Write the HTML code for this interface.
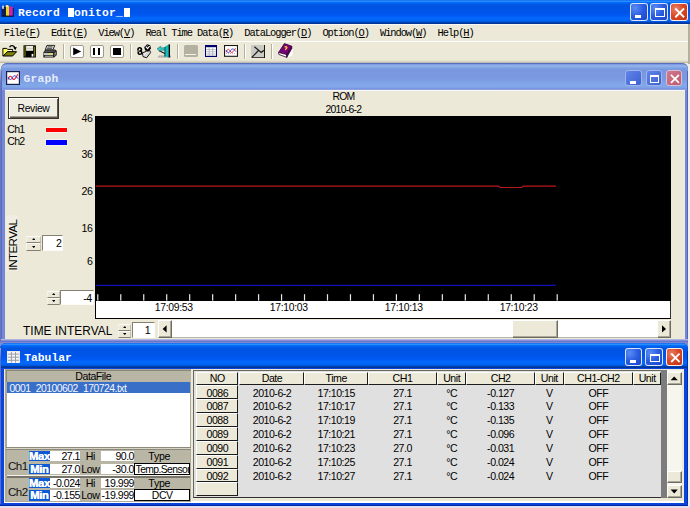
<!DOCTYPE html>
<html><head><meta charset="utf-8"><title>Record Monitor_M</title>
<style>
html,body{margin:0;padding:0;}
body{width:690px;height:508px;overflow:hidden;position:relative;background:#ece9d8;font-family:"Liberation Sans",sans-serif;}
div,i,svg{position:absolute;box-sizing:border-box;}
i{font-style:normal;display:block;text-align:center;top:0;}
.cells i{height:100%;}
.btn{background:#ece9d8;border:1px solid;border-color:#fff #716f64 #716f64 #fff;}
.sunk{background:#fff;border:1px solid;border-color:#716f64 #fff #fff #716f64;}
.hdr{background:#ece9d8;border:1px solid;border-color:#fff #1c1c1c #1c1c1c #fff;}
</style></head><body>

<div style="left:0.00px;top:0.00px;width:690.00px;height:23.70px;background:linear-gradient(to bottom,#0058ee 0%,#3593ff 4%,#288eff 6%,#127dff 8%,#036ffc 10%,#0262ee 14%,#0057e5 20%,#0054e3 24%,#0055eb 56%,#005bf5 66%,#026afe 76%,#0062ef 86%,#0052d6 92%,#0040ab 94%,#003092 100%);"></div>
<div style="left:0.00px;top:23.70px;width:690.00px;height:1.00px;background:#f8f8f4;"></div>
<svg style="left:1px;top:4px" width="14" height="14" viewBox="0 0 14 14">
<rect x="0.5" y="2.5" width="3.6" height="9.5" fill="#1a1a5a"/><rect x="1.2" y="1.6" width="1.6" height="3.2" fill="#e8f0ff"/>
<rect x="4.6" y="1.6" width="3.6" height="10.4" fill="#e8d826"/><rect x="5.2" y="1" width="1.6" height="2" fill="#fff8a0"/>
<rect x="8.3" y="2.6" width="3.6" height="9.4" fill="#d020b4"/>
<rect x="0.4" y="11.6" width="12.4" height="1.2" fill="#101020"/><rect x="3.9" y="3" width="0.8" height="9" fill="#000"/><rect x="11.8" y="4" width="0.9" height="8" fill="#181830"/>
</svg>
<div class="cells" style="left:18.00px;top:5.99px;height:15px;width:112.0px;font-family:'Liberation Mono', monospace;font-size:11.3px;line-height:15px;color:#fff;font-weight:bold;"><i style="left:0.00px;width:7.00px">R</i><i style="left:7.00px;width:7.00px">e</i><i style="left:14.00px;width:7.00px">c</i><i style="left:21.00px;width:7.00px">o</i><i style="left:28.00px;width:7.00px">r</i><i style="left:35.00px;width:7.00px">d</i><i style="left:49.90px;top:2.31px;width:6.00px;height:8.4px;background:#fff"></i><i style="left:56.00px;width:7.00px">o</i><i style="left:63.00px;width:7.00px">n</i><i style="left:70.00px;width:7.00px">i</i><i style="left:77.00px;width:7.00px">t</i><i style="left:84.00px;width:7.00px">o</i><i style="left:91.00px;width:7.00px">r</i><i style="left:98.00px;width:7.00px">_</i><i style="left:105.90px;top:2.31px;width:6.00px;height:8.4px;background:#fff"></i></div>
<div style="left:630.20px;top:2.50px;width:17.60px;height:18.30px;background:radial-gradient(circle at 25% 25%,#5a8cf5 0%,#2a5ce0 50%,#1a44c8 100%);border:1px solid rgba(240,248,255,0.88);border-radius:3px;"><div style="left:3.87px;top:11.35px;width:6.34px;height:2.93px;background:#fff"></div></div>
<div style="left:650.00px;top:2.50px;width:17.60px;height:18.30px;background:radial-gradient(circle at 25% 25%,#5a8cf5 0%,#2a5ce0 50%,#1a44c8 100%);border:1px solid rgba(240,248,255,0.88);border-radius:3px;"><div style="left:3.87px;top:4.58px;width:9.68px;height:8.78px;border:1px solid #fff;border-top-width:2.2px"></div></div>
<div style="left:670.10px;top:2.50px;width:18.00px;height:18.30px;background:radial-gradient(circle at 30% 30%,#e8846a 0%,#d94a28 45%,#c22f10 100%);border:1px solid rgba(255,255,255,0.9);border-radius:3px;"><svg style="left:0;top:0" width="18.00" height="18.30" viewBox="0 0 18 18"><path d="M5 5 L12.4 12.4 M12.4 5 L5 12.4" stroke="#fff" stroke-width="1.9" fill="none" stroke-linecap="square"/></svg></div>
<div style="left:0.00px;top:24.70px;width:690.00px;height:16.30px;background:#ece9d8;"></div>
<div class="cells" style="left:3.80px;top:25.13px;height:16px;width:36.1px;font-family:'Liberation Mono', monospace;font-size:10.4px;line-height:16px;color:#000;"><i style="left:0.00px;width:5.16px;">F</i><i style="left:5.16px;width:5.16px;">i</i><i style="left:10.32px;width:5.16px;">l</i><i style="left:15.48px;width:5.16px;">e</i><i style="left:20.64px;width:5.16px;">(</i><i style="left:25.80px;width:5.16px;text-decoration:underline;">F</i><i style="left:30.96px;width:5.16px;">)</i></div>
<div class="cells" style="left:51.02px;top:25.13px;height:16px;width:36.1px;font-family:'Liberation Mono', monospace;font-size:10.4px;line-height:16px;color:#000;"><i style="left:0.00px;width:5.16px;">E</i><i style="left:5.16px;width:5.16px;">d</i><i style="left:10.32px;width:5.16px;">i</i><i style="left:15.48px;width:5.16px;">t</i><i style="left:20.64px;width:5.16px;">(</i><i style="left:25.80px;width:5.16px;text-decoration:underline;">E</i><i style="left:30.96px;width:5.16px;">)</i></div>
<div class="cells" style="left:98.24px;top:25.13px;height:16px;width:36.1px;font-family:'Liberation Mono', monospace;font-size:10.4px;line-height:16px;color:#000;"><i style="left:0.00px;width:5.16px;">V</i><i style="left:5.16px;width:5.16px;">i</i><i style="left:10.32px;width:5.16px;">e</i><i style="left:15.48px;width:5.16px;">w</i><i style="left:20.64px;width:5.16px;">(</i><i style="left:25.80px;width:5.16px;text-decoration:underline;">V</i><i style="left:30.96px;width:5.16px;">)</i></div>
<div class="cells" style="left:145.46px;top:25.13px;height:16px;width:87.7px;font-family:'Liberation Mono', monospace;font-size:10.4px;line-height:16px;color:#000;"><i style="left:0.00px;width:5.16px;">R</i><i style="left:5.16px;width:5.16px;">e</i><i style="left:10.32px;width:5.16px;">a</i><i style="left:15.48px;width:5.16px;">l</i><i style="left:25.80px;width:5.16px;">T</i><i style="left:30.96px;width:5.16px;">i</i><i style="left:36.12px;width:5.16px;">m</i><i style="left:41.28px;width:5.16px;">e</i><i style="left:51.60px;width:5.16px;">D</i><i style="left:56.76px;width:5.16px;">a</i><i style="left:61.92px;width:5.16px;">t</i><i style="left:67.08px;width:5.16px;">a</i><i style="left:72.24px;width:5.16px;">(</i><i style="left:77.40px;width:5.16px;text-decoration:underline;">R</i><i style="left:82.56px;width:5.16px;">)</i></div>
<div class="cells" style="left:244.28px;top:25.13px;height:16px;width:67.1px;font-family:'Liberation Mono', monospace;font-size:10.4px;line-height:16px;color:#000;"><i style="left:0.00px;width:5.16px;">D</i><i style="left:5.16px;width:5.16px;">a</i><i style="left:10.32px;width:5.16px;">t</i><i style="left:15.48px;width:5.16px;">a</i><i style="left:20.64px;width:5.16px;">L</i><i style="left:25.80px;width:5.16px;">o</i><i style="left:30.96px;width:5.16px;">g</i><i style="left:36.12px;width:5.16px;">g</i><i style="left:41.28px;width:5.16px;">e</i><i style="left:46.44px;width:5.16px;">r</i><i style="left:51.60px;width:5.16px;">(</i><i style="left:56.76px;width:5.16px;text-decoration:underline;">D</i><i style="left:61.92px;width:5.16px;">)</i></div>
<div class="cells" style="left:322.46px;top:25.13px;height:16px;width:46.4px;font-family:'Liberation Mono', monospace;font-size:10.4px;line-height:16px;color:#000;"><i style="left:0.00px;width:5.16px;">O</i><i style="left:5.16px;width:5.16px;">p</i><i style="left:10.32px;width:5.16px;">t</i><i style="left:15.48px;width:5.16px;">i</i><i style="left:20.64px;width:5.16px;">o</i><i style="left:25.80px;width:5.16px;">n</i><i style="left:30.96px;width:5.16px;">(</i><i style="left:36.12px;width:5.16px;text-decoration:underline;">O</i><i style="left:41.28px;width:5.16px;">)</i></div>
<div class="cells" style="left:380.00px;top:25.13px;height:16px;width:46.4px;font-family:'Liberation Mono', monospace;font-size:10.4px;line-height:16px;color:#000;"><i style="left:0.00px;width:5.16px;">W</i><i style="left:5.16px;width:5.16px;">i</i><i style="left:10.32px;width:5.16px;">n</i><i style="left:15.48px;width:5.16px;">d</i><i style="left:20.64px;width:5.16px;">o</i><i style="left:25.80px;width:5.16px;">w</i><i style="left:30.96px;width:5.16px;">(</i><i style="left:36.12px;width:5.16px;text-decoration:underline;">W</i><i style="left:41.28px;width:5.16px;">)</i></div>
<div class="cells" style="left:437.54px;top:25.13px;height:16px;width:36.1px;font-family:'Liberation Mono', monospace;font-size:10.4px;line-height:16px;color:#000;"><i style="left:0.00px;width:5.16px;">H</i><i style="left:5.16px;width:5.16px;">e</i><i style="left:10.32px;width:5.16px;">l</i><i style="left:15.48px;width:5.16px;">p</i><i style="left:20.64px;width:5.16px;">(</i><i style="left:25.80px;width:5.16px;text-decoration:underline;">H</i><i style="left:30.96px;width:5.16px;">)</i></div>
<div style="left:0.00px;top:41.00px;width:690.00px;height:1.00px;background:#fff;"></div>
<div style="left:0.00px;top:42.00px;width:690.00px;height:18.50px;background:#ece9d8;"></div>
<div style="left:0.00px;top:59.80px;width:690.00px;height:1.00px;background:#e6e3d2;"></div>
<div style="left:0.00px;top:60.80px;width:690.00px;height:1.00px;background:#d8d5c5;"></div>
<div style="left:0.00px;top:61.80px;width:690.00px;height:1.40px;background:#c0bdae;"></div>
<div style="left:688.30px;top:24.00px;width:1.70px;height:40.00px;background:#b4b09e;"></div>
<div style="left:63.00px;top:43.80px;width:1.00px;height:15.00px;background:#b4b1a2;"></div>
<div style="left:64.00px;top:43.80px;width:1.00px;height:15.00px;background:#fff;"></div>
<div style="left:129.90px;top:43.80px;width:1.00px;height:15.00px;background:#b4b1a2;"></div>
<div style="left:130.90px;top:43.80px;width:1.00px;height:15.00px;background:#fff;"></div>
<div style="left:177.10px;top:43.80px;width:1.00px;height:15.00px;background:#b4b1a2;"></div>
<div style="left:178.10px;top:43.80px;width:1.00px;height:15.00px;background:#fff;"></div>
<div style="left:244.10px;top:43.80px;width:1.00px;height:15.00px;background:#b4b1a2;"></div>
<div style="left:245.10px;top:43.80px;width:1.00px;height:15.00px;background:#fff;"></div>
<div style="left:270.90px;top:43.80px;width:1.00px;height:15.00px;background:#b4b1a2;"></div>
<div style="left:271.90px;top:43.80px;width:1.00px;height:15.00px;background:#fff;"></div>
<svg style="left:0px;top:42px" width="40" height="18" viewBox="0 42 40 18">
<path d="M2.9 56 L2.9 48.4 L6.8 48.4 L7.6 49.4 L12.6 49.4 L12.6 51.6 L7.4 51.6 L3.4 56 Z" fill="#ffff50" stroke="#000" stroke-width="1"/>
<path d="M7.2 50.2 H12.2 V51.4 H7.2 Z" fill="#fff"/>
<path d="M3.2 56 L7.4 51.7 L16.6 51.7 L12.6 56 Z" fill="#808000" stroke="#000" stroke-width="1"/>
<path d="M9.6 47.2 C10.6 45.0 13.8 45.0 15 48" fill="none" stroke="#000" stroke-width="1.4"/>
<path d="M13.2 47.6 L16.8 47.0 L15.4 50.2 Z" fill="#000"/>
</svg>
<svg style="left:23px;top:44px" width="14" height="15" viewBox="23 44 14 15">
<rect x="23.5" y="45.3" width="12.4" height="12.2" fill="#000"/>
<rect x="24.4" y="46" width="1.2" height="10.6" fill="#74740a"/>
<rect x="33.8" y="46.6" width="1.2" height="10" fill="#74740a"/>
<rect x="26.1" y="46" width="7" height="4.8" fill="#ecebe2"/>
<rect x="26.1" y="48.2" width="7" height="0.7" fill="#c4c2b0"/>
<rect x="31.6" y="53.9" width="1.7" height="2.7" fill="#fff"/>
</svg>
<svg style="left:40px;top:42px" width="20" height="18" viewBox="40 42 20 18">
<path d="M43.4 52.6 L45.4 49.6 L55.2 49.6 L56.8 51 L56.8 55 L54.2 57.4 L43.4 57.4 Z" fill="#1c1c1c"/>
<path d="M45.2 49.8 L46.9 45.4 L54.8 45.4 L53 49.8 Z" fill="#d6d6d2" stroke="#181818" stroke-width="0.9"/>
<path d="M47.6 46.9 H52.6 M47 48.4 H52" stroke="#303030" stroke-width="0.8"/>
<path d="M45.6 50.4 L54.6 50.4 L55.8 51.6 L44.4 52.4 Z" fill="#55555a"/>
<rect x="43.9" y="53.2" width="9.2" height="1.6" fill="#f4f4f0"/>
<rect x="49" y="53.2" width="3.4" height="1.4" fill="#e8e840"/>
<rect x="44.8" y="55.7" width="8.2" height="1.0" fill="#c8c8c4"/>
<path d="M54 53.4 L56.4 51.6 L56.4 54.6 L54 56.8 Z" fill="#606068"/>
<circle cx="55.2" cy="53" r="0.6" fill="#d0d0d0"/>
</svg>
<div style="left:70.00px;top:44.60px;width:13.50px;height:13.40px;background:#fff;border:1px solid #9c9a8c;border-radius:2px;"><svg style="left:-1px;top:-1px" width="13.5" height="13.4" viewBox="0 0 13.5 13.4"><path d="M3.2 2.6 L11.2 6.5 L3.2 10.3 Z" fill="#000"/></svg></div>
<div style="left:90.20px;top:44.60px;width:13.50px;height:13.40px;background:#fff;border:1px solid #9c9a8c;border-radius:2px;"><div style="left:1.7px;top:2.7px;width:2.1px;height:6.6px;background:#000"></div><div style="left:7px;top:2.7px;width:2.2px;height:6.6px;background:#000"></div></div>
<div style="left:110.10px;top:44.60px;width:13.50px;height:13.40px;background:#fff;border:1px solid #9c9a8c;border-radius:2px;"><div style="left:1.6px;top:2.4px;width:7.9px;height:7px;background:#000"></div></div>
<svg style="left:134px;top:42px" width="20" height="18" viewBox="134 42 20 18">
<path d="M142.4 52.8 L149.6 50.2 L150.6 52.6 L146.6 57.8 L143 56.6 Z" fill="#d8d8d8" stroke="#000" stroke-width="0.9"/>
<path d="M143.6 55.2 L147 51.8" stroke="#fff" stroke-width="1"/>
<circle cx="139.7" cy="49.5" r="2.5" fill="#000"/><circle cx="139.9" cy="52.5" r="2.5" fill="#000"/>
<circle cx="139.6" cy="49.4" r="0.9" fill="#fff"/><circle cx="140" cy="52.7" r="0.9" fill="#fff"/>
<path d="M137.6 51 H139.4" stroke="#fff" stroke-width="0.7"/>
<path d="M144.2 47.2 L147.2 44.2 L150.2 45.2 L151 48.6 L148.4 51.6 L145.2 50.6 Z" fill="#000"/>
<path d="M145.8 46.6 L147.6 48.6 L149.6 46.0" fill="none" stroke="#fff" stroke-width="1.2"/>
<path d="M146.8 45.0 L148 46.2" stroke="#b0b0b0" stroke-width="0.8"/>
</svg>
<svg style="left:155px;top:42px" width="18" height="18" viewBox="155 42 18 18">
<path d="M157.4 57.4 L159 55.6 L171 55.6 L171 57.4 Z" fill="#a4a4a4"/>
<path d="M158.4 56.6 H170" stroke="#e6e3d2" stroke-width="0.6" stroke-dasharray="0.8 0.8"/>
<path d="M165 46.6 L168.8 44.4 L168.8 57.4 L165 56.4 Z" fill="#10c0c0"/>
<rect x="168.6" y="44.4" width="1.4" height="13" fill="#000"/>
<path d="M164.9 47 V56.6" stroke="#002828" stroke-width="0.9"/>
<path d="M158.8 50.6 L164.8 53.4" stroke="#101010" stroke-width="1.1"/>
<path d="M157 48.8 L160.6 46.2 L160.6 47.8 L164.6 47.8 L164.6 50.2 L160.6 50.2 L160.6 51.6 Z" fill="#38c8c8" stroke="#0a6060" stroke-width="0.5"/>
</svg>
<div style="left:183.90px;top:45.10px;width:13.90px;height:12.10px;background:#b5b1a1;border-radius:1.5px;"><div style="left:1.6px;top:9.4px;width:10.6px;height:1px;background:#f4f2e8"></div></div>
<svg style="left:205px;top:45px" width="12" height="12.4" viewBox="0 0 12 12.4">
<rect x="0" y="0" width="12" height="12.4" fill="#000070"/>
<rect x="1" y="2.2" width="10" height="8.6" fill="#fff"/>
<path d="M4.2 2.2 V10.8 M7.6 2.2 V10.8 M1 4.6 H11 M1 6.8 H11 M1 9 H11" stroke="#a8a8b8" stroke-width="0.8"/>
</svg>
<svg style="left:224.1px;top:45px" width="14" height="11.8" viewBox="0 0 14 11.8">
<rect x="0.5" y="0.5" width="13" height="10.8" fill="#fff" stroke="#181818" stroke-width="1.1"/>
<path d="M2 7.4 C3.4 3.4 5 3.6 6 6 S 8.6 8.4 11.6 3.2" fill="none" stroke="#e02020" stroke-width="0.9"/>
<path d="M2 5 C3.6 8.6 5.4 8 6.6 5.6 S 9.6 3.4 12 6.6" fill="none" stroke="#2828d0" stroke-width="0.9"/>
<path d="M2 8.6 H12" stroke="#c03030" stroke-width="0.5" stroke-dasharray="1 1"/>
</svg>
<svg style="left:251.1px;top:45px" width="14.2" height="13.2" viewBox="0 0 14.2 13.2">
<rect x="0" y="0" width="13.4" height="12.4" fill="#cbcbc6"/>
<path d="M13.6 0 V12.8 H0.6" fill="none" stroke="#101010" stroke-width="1.1"/>
<path d="M0.8 12.4 L8 5" fill="none" stroke="#202020" stroke-width="1.3"/>
<path d="M3.4 1.8 L10.2 7.4 L13.2 5.2" fill="none" stroke="#202020" stroke-width="1.3"/>
</svg>
<svg style="left:277.6px;top:43.4px" width="15" height="15" viewBox="0 0 15 15">
<path d="M10 9 L14.6 5 L14.6 12 L10 14.6 Z" fill="#fff"/>
<path d="M0.6 9.4 L6.4 0.6 L13.8 3.2 L8.6 11.6 Z" fill="#780078" stroke="#300030" stroke-width="0.8"/>
<path d="M0.6 9.4 L0.8 11.4 L8.8 14.4 L8.6 11.6 Z" fill="#fff" stroke="#300030" stroke-width="0.8"/>
<path d="M8.6 11.6 L13.8 3.2 L13.9 5.4 L8.8 14.4 Z" fill="#500050" stroke="#300030" stroke-width="0.6"/>
<path d="M6.6 4.2 Q8.4 3 9 4.6 Q9 5.6 7.6 6.2 L7.4 7" fill="none" stroke="#ffd820" stroke-width="1.2"/>
</svg>
<div style="left:688.10px;top:63.60px;width:1.90px;height:300.00px;background:#eeeef2;"></div>
<div style="left:1.30px;top:62.90px;width:686.80px;height:279.90px;background:#7488da;border-radius:6px 6px 0 0;"></div>
<div style="left:1.30px;top:62.90px;width:686.80px;height:26.70px;background:linear-gradient(to bottom,#7697e7 0%,#7e9ee3 3%,#94afe8 6%,#97b4e9 8%,#82a5e4 14%,#7c9fe2 17%,#7996de 25%,#7b99e1 56%,#82a9e9 81%,#80a5e7 89%,#7b96e1 94%,#7a93df 97%,#abbae3 100%);border-radius:6px 6px 0 0;border-top:1px solid #5870c0;"></div>
<div style="left:1.30px;top:70.90px;width:1.20px;height:271.90px;background:#5a6cc0;"></div>
<div style="left:0.00px;top:68.90px;width:1.40px;height:273.90px;background:linear-gradient(to bottom,#b4b6c8 0px,#6a74c0 14px);"></div>
<div style="left:686.60px;top:70.90px;width:1.50px;height:271.90px;background:#5565b6;"></div>
<div style="left:4.50px;top:89.60px;width:680.10px;height:249.00px;background:#ece9d8;border-top:1px solid #f8f8fc;"></div>
<div style="left:1.30px;top:338.60px;width:686.80px;height:4.20px;background:linear-gradient(to bottom,#c4c9ec 0%,#8a92d8 35%,#6670c8 65%,#3a52c8 100%);"></div>
<svg style="left:6px;top:70.8px" width="14" height="14" viewBox="0 0 14 14">
<rect x="0.6" y="0.6" width="12.8" height="12.8" fill="#fff" stroke="#18204a" stroke-width="1.2"/>
<path d="M2 8.6 C3.4 4.4 5 4.6 6.2 7 S 9 9 11.8 3.2" fill="none" stroke="#e02030" stroke-width="1.1"/>
<path d="M2 6 C3.6 9.6 5.4 9 6.6 6.4 S 9.6 4.4 12 7.6" fill="none" stroke="#3030d0" stroke-width="1"/>
</svg>
<div class="cells" style="left:23.30px;top:72.19px;height:15px;width:35.0px;font-family:'Liberation Mono', monospace;font-size:11.3px;line-height:15px;color:#e4ecfb;font-weight:bold;"><i style="left:0.00px;width:7.00px">G</i><i style="left:7.00px;width:7.00px">r</i><i style="left:14.00px;width:7.00px">a</i><i style="left:21.00px;width:7.00px">p</i><i style="left:28.00px;width:7.00px">h</i></div>
<div style="left:625.40px;top:69.90px;width:16.40px;height:16.30px;background:linear-gradient(135deg,#5f85ea,#3f60d0);border:1px solid #9fb4ea;border-radius:3px;"><div style="left:3.61px;top:10.11px;width:5.90px;height:2.61px;background:#fff"></div></div>
<div style="left:645.60px;top:69.90px;width:16.60px;height:16.30px;background:linear-gradient(135deg,#5f85ea,#3f60d0);border:1px solid #9fb4ea;border-radius:3px;"><div style="left:3.65px;top:4.08px;width:9.13px;height:7.82px;border:1px solid #fff;border-top-width:2.2px"></div></div>
<div style="left:665.70px;top:69.90px;width:16.40px;height:16.30px;background:linear-gradient(135deg,#cf7a90,#c0586e);border:1px solid #d7c0d4;border-radius:3px;"><svg style="left:0;top:0" width="16.40" height="16.30" viewBox="0 0 18 18"><path d="M5 5 L12.4 12.4 M12.4 5 L5 12.4" stroke="#fff" stroke-width="1.9" fill="none" stroke-linecap="square"/></svg></div>
<div style="left:7.90px;top:97.00px;width:51.20px;height:22.40px;background:#f0eee3;border:1px solid #3a322a;box-shadow:inset 1px 1px 0 #fff, inset -1px -1.6px 0 #5c574e;"></div>
<div style="font-family:'Liberation Sans', sans-serif;font-size:10.4px;line-height:14px;color:#000;white-space:pre;letter-spacing:-0.35px;left:3.50px;width:60px;text-align:center;top:102.30px;height:14px;">Review</div>
<div style="font-family:'Liberation Sans', sans-serif;font-size:10.6px;line-height:14px;color:#000;white-space:pre;letter-spacing:-0.8px;left:7.30px;top:122.13px;height:14px;">Ch1</div>
<div style="font-family:'Liberation Sans', sans-serif;font-size:10.6px;line-height:14px;color:#000;white-space:pre;letter-spacing:-0.8px;left:7.30px;top:134.33px;height:14px;">Ch2</div>
<div style="left:44.60px;top:126.70px;width:23.20px;height:6.80px;background:#f00;border:0.8px solid #f6f2ea;"></div>
<div style="left:44.60px;top:139.00px;width:23.20px;height:6.80px;background:#00f;border:0.8px solid #f6f2ea;"></div>
<div style="font-family:'Liberation Sans', sans-serif;font-size:10.4px;line-height:14px;color:#000;white-space:pre;letter-spacing:-0.8px;left:313.40px;width:60px;text-align:center;top:90.20px;height:14px;">ROM</div>
<div style="font-family:'Liberation Sans', sans-serif;font-size:10.4px;line-height:14px;color:#000;white-space:pre;letter-spacing:-0.7px;left:313.40px;width:60px;text-align:center;top:103.20px;height:14px;">2010-6-2</div>
<div style="font-family:'Liberation Sans', sans-serif;font-size:10.6px;line-height:14px;color:#000;white-space:pre;letter-spacing:-0.5px;left:52.30px;width:40px;text-align:right;top:111.13px;height:14px;">46</div>
<div style="font-family:'Liberation Sans', sans-serif;font-size:10.6px;line-height:14px;color:#000;white-space:pre;letter-spacing:-0.5px;left:52.30px;width:40px;text-align:right;top:147.13px;height:14px;">36</div>
<div style="font-family:'Liberation Sans', sans-serif;font-size:10.6px;line-height:14px;color:#000;white-space:pre;letter-spacing:-0.5px;left:52.30px;width:40px;text-align:right;top:184.23px;height:14px;">26</div>
<div style="font-family:'Liberation Sans', sans-serif;font-size:10.6px;line-height:14px;color:#000;white-space:pre;letter-spacing:-0.5px;left:52.30px;width:40px;text-align:right;top:220.53px;height:14px;">16</div>
<div style="font-family:'Liberation Sans', sans-serif;font-size:10.6px;line-height:14px;color:#000;white-space:pre;letter-spacing:-0.5px;left:52.30px;width:40px;text-align:right;top:253.83px;height:14px;">6</div>
<div style="left:95.30px;top:116.00px;width:575.40px;height:184.60px;background:#000;"></div>
<div style="left:95.30px;top:300.50px;width:575.40px;height:18.60px;background:#fff;border-left:1.2px solid #000;border-bottom:1px solid #000;border-right:0.6px solid #333;"></div>
<svg style="left:95.3px;top:116px" width="575.4" height="185" viewBox="95.3 116 575.4 185">
<path d="M96 186.1 H499 L500.5 187.5 H522 L523.5 186.1 H556.4" fill="none" stroke="#b81818" stroke-width="1.2"/>
<path d="M96 285.4 H556" fill="none" stroke="#1010b8" stroke-width="1.3"/>

<rect x="97.50" y="294.2" width="1.2" height="6.4" fill="#e8e8e8"/>
<rect x="120.47" y="294.2" width="1.2" height="6.4" fill="#e8e8e8"/>
<rect x="143.44" y="294.2" width="1.2" height="6.4" fill="#e8e8e8"/>
<rect x="166.41" y="294.2" width="1.2" height="6.4" fill="#e8e8e8"/>
<rect x="189.38" y="294.2" width="1.2" height="6.4" fill="#e8e8e8"/>
<rect x="212.35" y="294.2" width="1.2" height="6.4" fill="#e8e8e8"/>
<rect x="235.32" y="294.2" width="1.2" height="6.4" fill="#e8e8e8"/>
<rect x="258.29" y="294.2" width="1.2" height="6.4" fill="#e8e8e8"/>
<rect x="281.26" y="294.2" width="1.2" height="6.4" fill="#e8e8e8"/>
<rect x="304.23" y="294.2" width="1.2" height="6.4" fill="#e8e8e8"/>
<rect x="327.20" y="294.2" width="1.2" height="6.4" fill="#e8e8e8"/>
<rect x="350.17" y="294.2" width="1.2" height="6.4" fill="#e8e8e8"/>
<rect x="373.14" y="294.2" width="1.2" height="6.4" fill="#e8e8e8"/>
<rect x="396.11" y="294.2" width="1.2" height="6.4" fill="#e8e8e8"/>
<rect x="419.08" y="294.2" width="1.2" height="6.4" fill="#e8e8e8"/>
<rect x="442.05" y="294.2" width="1.2" height="6.4" fill="#e8e8e8"/>
<rect x="465.02" y="294.2" width="1.2" height="6.4" fill="#e8e8e8"/>
<rect x="487.99" y="294.2" width="1.2" height="6.4" fill="#e8e8e8"/>
<rect x="510.96" y="294.2" width="1.2" height="6.4" fill="#e8e8e8"/>
<rect x="533.93" y="294.2" width="1.2" height="6.4" fill="#e8e8e8"/>
<rect x="556.90" y="294.2" width="1.2" height="6.4" fill="#e8e8e8"/>
</svg>
<div style="font-family:'Liberation Sans', sans-serif;font-size:10.4px;line-height:14px;color:#000;white-space:pre;letter-spacing:-0.3px;left:133.80px;width:80px;text-align:center;top:301.00px;height:14px;">17:09:53</div>
<div style="font-family:'Liberation Sans', sans-serif;font-size:10.4px;line-height:14px;color:#000;white-space:pre;letter-spacing:-0.3px;left:248.80px;width:80px;text-align:center;top:301.00px;height:14px;">17:10:03</div>
<div style="font-family:'Liberation Sans', sans-serif;font-size:10.4px;line-height:14px;color:#000;white-space:pre;letter-spacing:-0.3px;left:363.80px;width:80px;text-align:center;top:301.00px;height:14px;">17:10:13</div>
<div style="font-family:'Liberation Sans', sans-serif;font-size:10.4px;line-height:14px;color:#000;white-space:pre;letter-spacing:-0.3px;left:478.70px;width:80px;text-align:center;top:301.00px;height:14px;">17:10:23</div>
<div style="left:5.60px;top:215.40px;width:12.00px;height:56.00px;background:#f0eee2;"></div>
<div style="left:12.9px;top:244.6px;width:0;height:0;"><div style="left:-40px;top:-8px;width:80px;height:16px;line-height:16px;text-align:center;font-size:11.6px;letter-spacing:-0.6px;transform:rotate(-90deg);white-space:pre;">INTERVAL</div></div>
<div style="left:26.00px;top:235.90px;width:15.30px;height:7.50px;background:#ebe8d8;border-style:solid;border-width:1px 0.6px 1.6px 1px;border-color:#fbfaf4 #c4c0b0 #858172 #f6f4ea;"><svg style="left:4.65px;top:1.45px" width="3.6" height="2.1" viewBox="0 0 3.6 2.1"><path d="M0 2.1 L1.8 0 L3.6 2.1 Z" fill="#000"/></svg></div>
<div style="left:26.00px;top:243.40px;width:15.30px;height:7.50px;background:#ebe8d8;border-style:solid;border-width:1px 0.6px 1.6px 1px;border-color:#fbfaf4 #c4c0b0 #858172 #f6f4ea;"><svg style="left:4.65px;top:1.45px" width="3.6" height="2.1" viewBox="0 0 3.6 2.1"><path d="M0 0 L1.8 2.1 L3.6 0 Z" fill="#000"/></svg></div>
<div style="left:41.70px;top:235.00px;width:21.30px;height:15.90px;background:#fff;border-style:solid;border-width:1.5px 1px 1px 1.3px;border-color:#858172 #fbfaf4 #fbfaf4 #858172;"></div>
<div style="font-family:'Liberation Sans', sans-serif;font-size:10.6px;line-height:14px;color:#000;white-space:pre;left:41.80px;width:20px;text-align:right;top:236.23px;height:14px;">2</div>
<div style="left:46.90px;top:291.30px;width:13.30px;height:6.90px;background:#ebe8d8;border-style:solid;border-width:1px 0.6px 1.6px 1px;border-color:#fbfaf4 #c4c0b0 #858172 #f6f4ea;"><svg style="left:3.65px;top:1.15px" width="3.6" height="2.1" viewBox="0 0 3.6 2.1"><path d="M0 2.1 L1.8 0 L3.6 2.1 Z" fill="#000"/></svg></div>
<div style="left:46.90px;top:298.20px;width:13.30px;height:6.90px;background:#ebe8d8;border-style:solid;border-width:1px 0.6px 1.6px 1px;border-color:#fbfaf4 #c4c0b0 #858172 #f6f4ea;"><svg style="left:3.65px;top:1.15px" width="3.6" height="2.1" viewBox="0 0 3.6 2.1"><path d="M0 0 L1.8 2.1 L3.6 0 Z" fill="#000"/></svg></div>
<div style="left:60.00px;top:290.40px;width:34.20px;height:14.60px;background:#fff;border-style:solid;border-width:1.5px 1px 1px 1.3px;border-color:#858172 #fbfaf4 #fbfaf4 #858172;"></div>
<div style="font-family:'Liberation Sans', sans-serif;font-size:10.6px;line-height:14px;color:#000;white-space:pre;letter-spacing:-0.5px;left:61.60px;width:30px;text-align:right;top:291.33px;height:14px;">-4</div>
<div style="font-family:'Liberation Sans', sans-serif;font-size:11.9px;line-height:15px;color:#000;white-space:pre;letter-spacing:0.05px;left:23.00px;top:324.38px;height:15px;">TIME INTERVAL</div>
<div style="left:118.30px;top:323.80px;width:13.20px;height:7.05px;background:#ebe8d8;border-style:solid;border-width:1px 0.6px 1.6px 1px;border-color:#fbfaf4 #c4c0b0 #858172 #f6f4ea;"><svg style="left:3.60px;top:1.23px" width="3.6" height="2.1" viewBox="0 0 3.6 2.1"><path d="M0 2.1 L1.8 0 L3.6 2.1 Z" fill="#000"/></svg></div>
<div style="left:118.30px;top:330.85px;width:13.20px;height:7.05px;background:#ebe8d8;border-style:solid;border-width:1px 0.6px 1.6px 1px;border-color:#fbfaf4 #c4c0b0 #858172 #f6f4ea;"><svg style="left:3.60px;top:1.23px" width="3.6" height="2.1" viewBox="0 0 3.6 2.1"><path d="M0 0 L1.8 2.1 L3.6 0 Z" fill="#000"/></svg></div>
<div style="left:132.10px;top:322.30px;width:22.60px;height:15.60px;background:#fff;border-style:solid;border-width:1.5px 1px 1px 1.3px;border-color:#858172 #fbfaf4 #fbfaf4 #858172;"></div>
<div style="font-family:'Liberation Sans', sans-serif;font-size:10.6px;line-height:14px;color:#000;white-space:pre;left:130.60px;width:20px;text-align:right;top:323.33px;height:14px;">1</div>
<div style="left:158.20px;top:320.20px;width:512.60px;height:17.50px;background:#fff;border-bottom:1px solid #b8b6aa;"></div>
<div style="left:158.20px;top:320.20px;width:13.60px;height:17.50px;background:#ece9d8;border:1px solid;border-color:#fff #6e6c60 #6e6c60 #fff;box-shadow:inset -1px -1px 0 #aca899;"><svg style="left:0;top:0" width="11.60" height="15.50" viewBox="0 0 11.60 15.50"><path d="M3.6 7.9 L7.6 4.2 L7.6 11.6 Z" fill="#000"/></svg></div>
<div style="left:657.30px;top:320.20px;width:13.60px;height:17.50px;background:#ece9d8;border:1px solid;border-color:#fff #6e6c60 #6e6c60 #fff;box-shadow:inset -1px -1px 0 #aca899;"><svg style="left:0;top:0" width="11.60" height="15.50" viewBox="0 0 11.60 15.50"><path d="M8 7.9 L4 4.2 L4 11.6 Z" fill="#000"/></svg></div>
<div style="left:511.60px;top:320.20px;width:46.30px;height:17.50px;background:#ece9d8;border:1px solid;border-color:#fff #6e6c60 #6e6c60 #fff;box-shadow:inset -1px -1px 0 #aca899;"></div>
<div style="left:0.00px;top:342.00px;width:688.00px;height:7.00px;background:#7f88cc;"></div>
<div style="left:0.00px;top:342.80px;width:688.00px;height:165.20px;background:#0a46dc;border-radius:6px 6px 0 0;"></div>
<div style="left:0.00px;top:342.80px;width:688.00px;height:25.60px;background:linear-gradient(to bottom,#0058ee 0%,#3593ff 4%,#288eff 6%,#127dff 8%,#036ffc 10%,#0262ee 14%,#0057e5 20%,#0054e3 24%,#0055eb 56%,#005bf5 66%,#026afe 76%,#0062ef 86%,#0052d6 92%,#0040ab 94%,#003092 100%);border-radius:6px 6px 0 0;"></div>
<div style="left:0.00px;top:347.80px;width:1.10px;height:170.00px;background:linear-gradient(to bottom,#a0a6d0 0px,#5a6cd4 10px);"></div>
<div style="left:687.00px;top:350.80px;width:1.00px;height:170.00px;background:#0030b0;"></div>
<div style="left:688.00px;top:350.00px;width:2.00px;height:158.00px;background:#eeeef2;"></div>
<div style="left:4.40px;top:368.60px;width:679.90px;height:134.80px;background:#ece9d8;"></div>
<div style="left:4.40px;top:500.90px;width:679.90px;height:2.60px;background:#fff;"></div>
<div style="left:0.00px;top:503.50px;width:688.00px;height:2.80px;background:#0a40d8;"></div>
<div style="left:0.00px;top:505.20px;width:688.00px;height:1.30px;background:#0028a8;"></div>
<div style="left:0.00px;top:506.40px;width:690.00px;height:1.60px;background:#dfe0ec;"></div>
<svg style="left:6.7px;top:350.8px" width="12.9" height="12.4" viewBox="0 0 12.9 12.4">
<rect x="0" y="0" width="12.9" height="12.4" fill="#f6f6f6"/>
<path d="M4.4 0.8 V11.8 M8.5 0.8 V11.8 M0.8 3.1 H12.2 M0.8 6.2 H12.2 M0.8 9.3 H12.2" stroke="#9c9ca8" stroke-width="1"/>
<rect x="0.3" y="0.3" width="12.3" height="11.8" fill="none" stroke="#e8e8ee" stroke-width="0.8"/>
</svg>
<div class="cells" style="left:24.20px;top:350.89px;height:15px;width:47.6px;font-family:'Liberation Mono', monospace;font-size:11.3px;line-height:15px;color:#fff;font-weight:bold;"><i style="left:0.00px;width:6.80px">T</i><i style="left:6.80px;width:6.80px">a</i><i style="left:13.60px;width:6.80px">b</i><i style="left:20.40px;width:6.80px">u</i><i style="left:27.20px;width:6.80px">l</i><i style="left:34.00px;width:6.80px">a</i><i style="left:40.80px;width:6.80px">r</i></div>
<div style="left:625.00px;top:348.20px;width:17.40px;height:18.10px;background:radial-gradient(circle at 25% 25%,#5a8cf5 0%,#2a5ce0 50%,#1a44c8 100%);border:1px solid rgba(240,248,255,0.88);border-radius:3px;"><div style="left:3.83px;top:11.22px;width:6.26px;height:2.90px;background:#fff"></div></div>
<div style="left:645.20px;top:348.20px;width:17.40px;height:18.10px;background:radial-gradient(circle at 25% 25%,#5a8cf5 0%,#2a5ce0 50%,#1a44c8 100%);border:1px solid rgba(240,248,255,0.88);border-radius:3px;"><div style="left:3.83px;top:4.53px;width:9.57px;height:8.69px;border:1px solid #fff;border-top-width:2.2px"></div></div>
<div style="left:665.50px;top:348.20px;width:17.40px;height:18.10px;background:radial-gradient(circle at 30% 30%,#e8846a 0%,#d94a28 45%,#c22f10 100%);border:1px solid rgba(255,255,255,0.9);border-radius:3px;"><svg style="left:0;top:0" width="17.40" height="18.10" viewBox="0 0 18 18"><path d="M5 5 L12.4 12.4 M12.4 5 L5 12.4" stroke="#fff" stroke-width="1.9" fill="none" stroke-linecap="square"/></svg></div>
<div style="left:5.20px;top:369.40px;width:186.00px;height:133.00px;background:#aeaa9a;"></div>
<div style="left:6.00px;top:369.90px;width:185.10px;height:11.90px;background:#bab6a6;border-top:1px solid #8a8878;border-left:1px solid #8a8878;"></div>
<div style="font-family:'Liberation Sans', sans-serif;font-size:10.6px;line-height:14px;color:#000;white-space:pre;letter-spacing:-0.45px;left:53.20px;width:80px;text-align:center;top:369.33px;height:14px;">DataFile</div>
<div style="left:7.10px;top:381.70px;width:183.40px;height:65.30px;background:#fff;"></div>
<div style="left:7.10px;top:381.70px;width:183.40px;height:11.70px;background:#3a6fc8;"></div>
<div style="font-family:'Liberation Sans', sans-serif;font-size:10.4px;line-height:14px;color:#f4f6ff;white-space:pre;letter-spacing:-0.52px;left:9.40px;top:382.20px;height:14px;">0001_20100602_170724.txt</div>
<div style="left:6.00px;top:447.00px;width:185.00px;height:3.20px;background:#8c897a;"></div>
<div style="left:6.00px;top:448.40px;width:185.00px;height:1.00px;background:#d8d5c8;"></div>
<div style="left:7.10px;top:450.00px;width:183.30px;height:25.00px;background:#bab6a6;"></div>
<div style="font-family:'Liberation Sans', sans-serif;font-size:11.6px;line-height:15px;color:#111;white-space:pre;letter-spacing:-0.5px;left:8.00px;top:457.58px;height:15px;">Ch1</div>
<div style="left:28.80px;top:451.30px;width:20.90px;height:10.20px;background:#0c5ad6;"></div>
<div style="font-family:'Liberation Sans', sans-serif;font-size:11.2px;line-height:15px;color:#fff;white-space:pre;letter-spacing:-0.35px;font-weight:bold;left:24.20px;width:30px;text-align:center;top:449.12px;height:15px;text-shadow:0.5px 0 0 #fff;">Max</div>
<div style="left:50.00px;top:451.30px;width:30.30px;height:10.20px;background:#fff;"></div>
<div style="font-family:'Liberation Sans', sans-serif;font-size:10.6px;line-height:14px;color:#000;white-space:pre;letter-spacing:-0.5px;left:40.00px;width:40px;text-align:right;top:449.13px;height:14px;">27.1</div>
<div style="font-family:'Liberation Sans', sans-serif;font-size:10.6px;line-height:14px;color:#000;white-space:pre;letter-spacing:-0.4px;left:75.30px;width:30px;text-align:center;top:449.13px;height:14px;">Hi</div>
<div style="left:101.10px;top:451.30px;width:33.10px;height:10.20px;background:#fff;"></div>
<div style="font-family:'Liberation Sans', sans-serif;font-size:10.6px;line-height:14px;color:#000;white-space:pre;letter-spacing:-0.5px;left:94.00px;width:40px;text-align:right;top:449.13px;height:14px;">90.0</div>
<div style="left:28.80px;top:463.90px;width:20.90px;height:10.60px;background:#0c5ad6;"></div>
<div style="font-family:'Liberation Sans', sans-serif;font-size:11.2px;line-height:15px;color:#fff;white-space:pre;letter-spacing:-0.35px;font-weight:bold;left:24.20px;width:30px;text-align:center;top:462.12px;height:15px;text-shadow:0.5px 0 0 #fff;">Min</div>
<div style="left:50.00px;top:463.90px;width:30.30px;height:10.60px;background:#fff;"></div>
<div style="font-family:'Liberation Sans', sans-serif;font-size:10.6px;line-height:14px;color:#000;white-space:pre;letter-spacing:-0.5px;left:40.00px;width:40px;text-align:right;top:462.13px;height:14px;">27.0</div>
<div style="font-family:'Liberation Sans', sans-serif;font-size:10.6px;line-height:14px;color:#000;white-space:pre;letter-spacing:-0.4px;left:75.30px;width:30px;text-align:center;top:462.13px;height:14px;">Low</div>
<div style="left:101.10px;top:463.90px;width:33.10px;height:10.60px;background:#fff;"></div>
<div style="font-family:'Liberation Sans', sans-serif;font-size:10.6px;line-height:14px;color:#000;white-space:pre;letter-spacing:-0.5px;left:94.00px;width:40px;text-align:right;top:462.13px;height:14px;">-30.0</div>
<div style="font-family:'Liberation Sans', sans-serif;font-size:10.6px;line-height:14px;color:#000;white-space:pre;letter-spacing:-0.3px;left:139.20px;width:40px;text-align:center;top:449.13px;height:14px;">Type</div>
<div style="left:134.20px;top:463.10px;width:55.90px;height:11.60px;background:#fff;border:1.1px solid #000;overflow:hidden;"><div style="left:0;top:-0.2px;width:54px;height:12px;line-height:12px;font-size:10.4px;letter-spacing:-0.62px;white-space:pre;text-align:left;padding-left:0.4px">Temp.Sensor</div></div>
<div style="left:7.10px;top:475.00px;width:183.30px;height:1.20px;background:#f4f2ea;"></div>
<div style="left:7.10px;top:476.20px;width:183.30px;height:1.40px;background:#77756a;"></div>
<div style="left:7.10px;top:477.60px;width:183.30px;height:23.30px;background:#bab6a6;"></div>
<div style="font-family:'Liberation Sans', sans-serif;font-size:11.6px;line-height:15px;color:#111;white-space:pre;letter-spacing:-0.5px;left:8.00px;top:484.33px;height:15px;">Ch2</div>
<div style="left:28.80px;top:478.40px;width:20.90px;height:9.50px;background:#0c5ad6;"></div>
<div style="font-family:'Liberation Sans', sans-serif;font-size:11.2px;line-height:15px;color:#fff;white-space:pre;letter-spacing:-0.35px;font-weight:bold;left:24.20px;width:30px;text-align:center;top:475.52px;height:15px;text-shadow:0.5px 0 0 #fff;">Max</div>
<div style="left:50.00px;top:478.40px;width:30.30px;height:9.50px;background:#fff;"></div>
<div style="font-family:'Liberation Sans', sans-serif;font-size:10.6px;line-height:14px;color:#000;white-space:pre;letter-spacing:-0.5px;left:40.00px;width:40px;text-align:right;top:475.53px;height:14px;">-0.024</div>
<div style="font-family:'Liberation Sans', sans-serif;font-size:10.6px;line-height:14px;color:#000;white-space:pre;letter-spacing:-0.4px;left:75.30px;width:30px;text-align:center;top:475.53px;height:14px;">Hi</div>
<div style="left:101.10px;top:478.40px;width:33.10px;height:9.50px;background:#fff;"></div>
<div style="font-family:'Liberation Sans', sans-serif;font-size:10.6px;line-height:14px;color:#000;white-space:pre;letter-spacing:-0.5px;left:94.00px;width:40px;text-align:right;top:475.53px;height:14px;">19.999</div>
<div style="left:28.80px;top:490.20px;width:20.90px;height:10.60px;background:#0c5ad6;"></div>
<div style="font-family:'Liberation Sans', sans-serif;font-size:11.2px;line-height:15px;color:#fff;white-space:pre;letter-spacing:-0.35px;font-weight:bold;left:24.20px;width:30px;text-align:center;top:488.42px;height:15px;text-shadow:0.5px 0 0 #fff;">Min</div>
<div style="left:50.00px;top:490.20px;width:30.30px;height:10.60px;background:#fff;"></div>
<div style="font-family:'Liberation Sans', sans-serif;font-size:10.6px;line-height:14px;color:#000;white-space:pre;letter-spacing:-0.5px;left:40.00px;width:40px;text-align:right;top:488.43px;height:14px;">-0.155</div>
<div style="font-family:'Liberation Sans', sans-serif;font-size:10.6px;line-height:14px;color:#000;white-space:pre;letter-spacing:-0.4px;left:75.30px;width:30px;text-align:center;top:488.43px;height:14px;">Low</div>
<div style="left:101.10px;top:490.20px;width:33.10px;height:10.60px;background:#fff;"></div>
<div style="font-family:'Liberation Sans', sans-serif;font-size:10.6px;line-height:14px;color:#000;white-space:pre;letter-spacing:-0.5px;left:94.00px;width:40px;text-align:right;top:488.43px;height:14px;">-19.999</div>
<div style="font-family:'Liberation Sans', sans-serif;font-size:10.6px;line-height:14px;color:#000;white-space:pre;letter-spacing:-0.3px;left:139.20px;width:40px;text-align:center;top:475.53px;height:14px;">Type</div>
<div style="left:134.20px;top:489.40px;width:55.90px;height:11.60px;background:#fff;border:1.1px solid #000;overflow:hidden;"><div style="left:0;top:-0.2px;width:54px;height:12px;line-height:12px;font-size:10.4px;letter-spacing:-0.4px;white-space:pre;text-align:center;padding-left:0px">DCV</div></div>
<div style="left:193.40px;top:370.20px;width:468.00px;height:127.40px;background:#e0e0e0;border-top:1.6px solid #6a685e;border-left:1.6px solid #6a685e;border-bottom:1.2px solid #303030;"></div>
<div style="left:661.20px;top:370.20px;width:5.60px;height:127.40px;background:#7c7c7c;"></div>
<div class="hdr" style="left:195.80px;top:372.00px;width:42.70px;height:13.40px"></div>
<div style="font-family:'Liberation Sans', sans-serif;font-size:10.6px;line-height:14px;color:#000;white-space:pre;letter-spacing:-0.45px;left:177.35px;width:80px;text-align:center;top:371.13px;height:14px;">NO</div>
<div class="hdr" style="left:239.40px;top:372.00px;width:64.80px;height:13.40px"></div>
<div style="font-family:'Liberation Sans', sans-serif;font-size:10.6px;line-height:14px;color:#000;white-space:pre;letter-spacing:-0.45px;left:232.00px;width:80px;text-align:center;top:371.13px;height:14px;">Date</div>
<div class="hdr" style="left:304.20px;top:372.00px;width:63.60px;height:13.40px"></div>
<div style="font-family:'Liberation Sans', sans-serif;font-size:10.6px;line-height:14px;color:#000;white-space:pre;letter-spacing:-0.45px;left:296.20px;width:80px;text-align:center;top:371.13px;height:14px;">Time</div>
<div class="hdr" style="left:367.80px;top:372.00px;width:69.00px;height:13.40px"></div>
<div style="font-family:'Liberation Sans', sans-serif;font-size:10.6px;line-height:14px;color:#000;white-space:pre;letter-spacing:-0.45px;left:362.50px;width:80px;text-align:center;top:371.13px;height:14px;">CH1</div>
<div class="hdr" style="left:436.80px;top:372.00px;width:29.40px;height:13.40px"></div>
<div style="font-family:'Liberation Sans', sans-serif;font-size:10.6px;line-height:14px;color:#000;white-space:pre;letter-spacing:-0.45px;left:411.70px;width:80px;text-align:center;top:371.13px;height:14px;">Unit</div>
<div class="hdr" style="left:466.20px;top:372.00px;width:68.50px;height:13.40px"></div>
<div style="font-family:'Liberation Sans', sans-serif;font-size:10.6px;line-height:14px;color:#000;white-space:pre;letter-spacing:-0.45px;left:460.65px;width:80px;text-align:center;top:371.13px;height:14px;">CH2</div>
<div class="hdr" style="left:534.70px;top:372.00px;width:28.90px;height:13.40px"></div>
<div style="font-family:'Liberation Sans', sans-serif;font-size:10.6px;line-height:14px;color:#000;white-space:pre;letter-spacing:-0.45px;left:509.35px;width:80px;text-align:center;top:371.13px;height:14px;">Unit</div>
<div class="hdr" style="left:563.60px;top:372.00px;width:69.20px;height:13.40px"></div>
<div style="font-family:'Liberation Sans', sans-serif;font-size:10.6px;line-height:14px;color:#000;white-space:pre;letter-spacing:-0.45px;left:558.40px;width:80px;text-align:center;top:371.13px;height:14px;">CH1-CH2</div>
<div class="hdr" style="left:632.80px;top:372.00px;width:28.40px;height:13.40px"></div>
<div style="font-family:'Liberation Sans', sans-serif;font-size:10.6px;line-height:14px;color:#000;white-space:pre;letter-spacing:-0.45px;left:607.20px;width:80px;text-align:center;top:371.13px;height:14px;">Unit</div>
<div class="hdr" style="left:195.80px;top:385.40px;width:42.70px;height:13.86px"></div>
<div style="font-family:'Liberation Sans', sans-serif;font-size:10.6px;line-height:14px;color:#000;white-space:pre;letter-spacing:-0.5px;left:177.35px;width:80px;text-align:center;top:385.63px;height:14px;">0086</div>
<div style="font-family:'Liberation Sans', sans-serif;font-size:10.6px;line-height:14px;color:#000;white-space:pre;letter-spacing:-0.5px;left:232.00px;width:80px;text-align:center;top:385.63px;height:14px;">2010-6-2</div>
<div style="font-family:'Liberation Sans', sans-serif;font-size:10.6px;line-height:14px;color:#000;white-space:pre;letter-spacing:-0.5px;left:296.20px;width:80px;text-align:center;top:385.63px;height:14px;">17:10:15</div>
<div style="font-family:'Liberation Sans', sans-serif;font-size:10.6px;line-height:14px;color:#000;white-space:pre;letter-spacing:-0.5px;left:362.50px;width:80px;text-align:center;top:385.63px;height:14px;">27.1</div>
<div style="font-family:'Liberation Sans', sans-serif;font-size:10.6px;line-height:14px;color:#000;white-space:pre;letter-spacing:-0.5px;left:411.70px;width:80px;text-align:center;top:385.63px;height:14px;">°C</div>
<div style="font-family:'Liberation Sans', sans-serif;font-size:10.6px;line-height:14px;color:#000;white-space:pre;letter-spacing:-0.5px;left:460.65px;width:80px;text-align:center;top:385.63px;height:14px;">-0.127</div>
<div style="font-family:'Liberation Sans', sans-serif;font-size:10.6px;line-height:14px;color:#000;white-space:pre;letter-spacing:-0.5px;left:509.35px;width:80px;text-align:center;top:385.63px;height:14px;">V</div>
<div style="font-family:'Liberation Sans', sans-serif;font-size:10.6px;line-height:14px;color:#000;white-space:pre;letter-spacing:-0.5px;left:558.40px;width:80px;text-align:center;top:385.63px;height:14px;">OFF</div>
<div class="hdr" style="left:195.80px;top:399.26px;width:42.70px;height:13.86px"></div>
<div style="font-family:'Liberation Sans', sans-serif;font-size:10.6px;line-height:14px;color:#000;white-space:pre;letter-spacing:-0.5px;left:177.35px;width:80px;text-align:center;top:399.49px;height:14px;">0087</div>
<div style="font-family:'Liberation Sans', sans-serif;font-size:10.6px;line-height:14px;color:#000;white-space:pre;letter-spacing:-0.5px;left:232.00px;width:80px;text-align:center;top:399.49px;height:14px;">2010-6-2</div>
<div style="font-family:'Liberation Sans', sans-serif;font-size:10.6px;line-height:14px;color:#000;white-space:pre;letter-spacing:-0.5px;left:296.20px;width:80px;text-align:center;top:399.49px;height:14px;">17:10:17</div>
<div style="font-family:'Liberation Sans', sans-serif;font-size:10.6px;line-height:14px;color:#000;white-space:pre;letter-spacing:-0.5px;left:362.50px;width:80px;text-align:center;top:399.49px;height:14px;">27.1</div>
<div style="font-family:'Liberation Sans', sans-serif;font-size:10.6px;line-height:14px;color:#000;white-space:pre;letter-spacing:-0.5px;left:411.70px;width:80px;text-align:center;top:399.49px;height:14px;">°C</div>
<div style="font-family:'Liberation Sans', sans-serif;font-size:10.6px;line-height:14px;color:#000;white-space:pre;letter-spacing:-0.5px;left:460.65px;width:80px;text-align:center;top:399.49px;height:14px;">-0.133</div>
<div style="font-family:'Liberation Sans', sans-serif;font-size:10.6px;line-height:14px;color:#000;white-space:pre;letter-spacing:-0.5px;left:509.35px;width:80px;text-align:center;top:399.49px;height:14px;">V</div>
<div style="font-family:'Liberation Sans', sans-serif;font-size:10.6px;line-height:14px;color:#000;white-space:pre;letter-spacing:-0.5px;left:558.40px;width:80px;text-align:center;top:399.49px;height:14px;">OFF</div>
<div class="hdr" style="left:195.80px;top:413.12px;width:42.70px;height:13.86px"></div>
<div style="font-family:'Liberation Sans', sans-serif;font-size:10.6px;line-height:14px;color:#000;white-space:pre;letter-spacing:-0.5px;left:177.35px;width:80px;text-align:center;top:413.35px;height:14px;">0088</div>
<div style="font-family:'Liberation Sans', sans-serif;font-size:10.6px;line-height:14px;color:#000;white-space:pre;letter-spacing:-0.5px;left:232.00px;width:80px;text-align:center;top:413.35px;height:14px;">2010-6-2</div>
<div style="font-family:'Liberation Sans', sans-serif;font-size:10.6px;line-height:14px;color:#000;white-space:pre;letter-spacing:-0.5px;left:296.20px;width:80px;text-align:center;top:413.35px;height:14px;">17:10:19</div>
<div style="font-family:'Liberation Sans', sans-serif;font-size:10.6px;line-height:14px;color:#000;white-space:pre;letter-spacing:-0.5px;left:362.50px;width:80px;text-align:center;top:413.35px;height:14px;">27.1</div>
<div style="font-family:'Liberation Sans', sans-serif;font-size:10.6px;line-height:14px;color:#000;white-space:pre;letter-spacing:-0.5px;left:411.70px;width:80px;text-align:center;top:413.35px;height:14px;">°C</div>
<div style="font-family:'Liberation Sans', sans-serif;font-size:10.6px;line-height:14px;color:#000;white-space:pre;letter-spacing:-0.5px;left:460.65px;width:80px;text-align:center;top:413.35px;height:14px;">-0.135</div>
<div style="font-family:'Liberation Sans', sans-serif;font-size:10.6px;line-height:14px;color:#000;white-space:pre;letter-spacing:-0.5px;left:509.35px;width:80px;text-align:center;top:413.35px;height:14px;">V</div>
<div style="font-family:'Liberation Sans', sans-serif;font-size:10.6px;line-height:14px;color:#000;white-space:pre;letter-spacing:-0.5px;left:558.40px;width:80px;text-align:center;top:413.35px;height:14px;">OFF</div>
<div class="hdr" style="left:195.80px;top:426.98px;width:42.70px;height:13.86px"></div>
<div style="font-family:'Liberation Sans', sans-serif;font-size:10.6px;line-height:14px;color:#000;white-space:pre;letter-spacing:-0.5px;left:177.35px;width:80px;text-align:center;top:427.21px;height:14px;">0089</div>
<div style="font-family:'Liberation Sans', sans-serif;font-size:10.6px;line-height:14px;color:#000;white-space:pre;letter-spacing:-0.5px;left:232.00px;width:80px;text-align:center;top:427.21px;height:14px;">2010-6-2</div>
<div style="font-family:'Liberation Sans', sans-serif;font-size:10.6px;line-height:14px;color:#000;white-space:pre;letter-spacing:-0.5px;left:296.20px;width:80px;text-align:center;top:427.21px;height:14px;">17:10:21</div>
<div style="font-family:'Liberation Sans', sans-serif;font-size:10.6px;line-height:14px;color:#000;white-space:pre;letter-spacing:-0.5px;left:362.50px;width:80px;text-align:center;top:427.21px;height:14px;">27.1</div>
<div style="font-family:'Liberation Sans', sans-serif;font-size:10.6px;line-height:14px;color:#000;white-space:pre;letter-spacing:-0.5px;left:411.70px;width:80px;text-align:center;top:427.21px;height:14px;">°C</div>
<div style="font-family:'Liberation Sans', sans-serif;font-size:10.6px;line-height:14px;color:#000;white-space:pre;letter-spacing:-0.5px;left:460.65px;width:80px;text-align:center;top:427.21px;height:14px;">-0.096</div>
<div style="font-family:'Liberation Sans', sans-serif;font-size:10.6px;line-height:14px;color:#000;white-space:pre;letter-spacing:-0.5px;left:509.35px;width:80px;text-align:center;top:427.21px;height:14px;">V</div>
<div style="font-family:'Liberation Sans', sans-serif;font-size:10.6px;line-height:14px;color:#000;white-space:pre;letter-spacing:-0.5px;left:558.40px;width:80px;text-align:center;top:427.21px;height:14px;">OFF</div>
<div class="hdr" style="left:195.80px;top:440.84px;width:42.70px;height:13.86px"></div>
<div style="font-family:'Liberation Sans', sans-serif;font-size:10.6px;line-height:14px;color:#000;white-space:pre;letter-spacing:-0.5px;left:177.35px;width:80px;text-align:center;top:441.07px;height:14px;">0090</div>
<div style="font-family:'Liberation Sans', sans-serif;font-size:10.6px;line-height:14px;color:#000;white-space:pre;letter-spacing:-0.5px;left:232.00px;width:80px;text-align:center;top:441.07px;height:14px;">2010-6-2</div>
<div style="font-family:'Liberation Sans', sans-serif;font-size:10.6px;line-height:14px;color:#000;white-space:pre;letter-spacing:-0.5px;left:296.20px;width:80px;text-align:center;top:441.07px;height:14px;">17:10:23</div>
<div style="font-family:'Liberation Sans', sans-serif;font-size:10.6px;line-height:14px;color:#000;white-space:pre;letter-spacing:-0.5px;left:362.50px;width:80px;text-align:center;top:441.07px;height:14px;">27.0</div>
<div style="font-family:'Liberation Sans', sans-serif;font-size:10.6px;line-height:14px;color:#000;white-space:pre;letter-spacing:-0.5px;left:411.70px;width:80px;text-align:center;top:441.07px;height:14px;">°C</div>
<div style="font-family:'Liberation Sans', sans-serif;font-size:10.6px;line-height:14px;color:#000;white-space:pre;letter-spacing:-0.5px;left:460.65px;width:80px;text-align:center;top:441.07px;height:14px;">-0.031</div>
<div style="font-family:'Liberation Sans', sans-serif;font-size:10.6px;line-height:14px;color:#000;white-space:pre;letter-spacing:-0.5px;left:509.35px;width:80px;text-align:center;top:441.07px;height:14px;">V</div>
<div style="font-family:'Liberation Sans', sans-serif;font-size:10.6px;line-height:14px;color:#000;white-space:pre;letter-spacing:-0.5px;left:558.40px;width:80px;text-align:center;top:441.07px;height:14px;">OFF</div>
<div class="hdr" style="left:195.80px;top:454.70px;width:42.70px;height:13.86px"></div>
<div style="font-family:'Liberation Sans', sans-serif;font-size:10.6px;line-height:14px;color:#000;white-space:pre;letter-spacing:-0.5px;left:177.35px;width:80px;text-align:center;top:454.93px;height:14px;">0091</div>
<div style="font-family:'Liberation Sans', sans-serif;font-size:10.6px;line-height:14px;color:#000;white-space:pre;letter-spacing:-0.5px;left:232.00px;width:80px;text-align:center;top:454.93px;height:14px;">2010-6-2</div>
<div style="font-family:'Liberation Sans', sans-serif;font-size:10.6px;line-height:14px;color:#000;white-space:pre;letter-spacing:-0.5px;left:296.20px;width:80px;text-align:center;top:454.93px;height:14px;">17:10:25</div>
<div style="font-family:'Liberation Sans', sans-serif;font-size:10.6px;line-height:14px;color:#000;white-space:pre;letter-spacing:-0.5px;left:362.50px;width:80px;text-align:center;top:454.93px;height:14px;">27.1</div>
<div style="font-family:'Liberation Sans', sans-serif;font-size:10.6px;line-height:14px;color:#000;white-space:pre;letter-spacing:-0.5px;left:411.70px;width:80px;text-align:center;top:454.93px;height:14px;">°C</div>
<div style="font-family:'Liberation Sans', sans-serif;font-size:10.6px;line-height:14px;color:#000;white-space:pre;letter-spacing:-0.5px;left:460.65px;width:80px;text-align:center;top:454.93px;height:14px;">-0.024</div>
<div style="font-family:'Liberation Sans', sans-serif;font-size:10.6px;line-height:14px;color:#000;white-space:pre;letter-spacing:-0.5px;left:509.35px;width:80px;text-align:center;top:454.93px;height:14px;">V</div>
<div style="font-family:'Liberation Sans', sans-serif;font-size:10.6px;line-height:14px;color:#000;white-space:pre;letter-spacing:-0.5px;left:558.40px;width:80px;text-align:center;top:454.93px;height:14px;">OFF</div>
<div class="hdr" style="left:195.80px;top:468.56px;width:42.70px;height:13.86px"></div>
<div style="font-family:'Liberation Sans', sans-serif;font-size:10.6px;line-height:14px;color:#000;white-space:pre;letter-spacing:-0.5px;left:177.35px;width:80px;text-align:center;top:468.79px;height:14px;">0092</div>
<div style="font-family:'Liberation Sans', sans-serif;font-size:10.6px;line-height:14px;color:#000;white-space:pre;letter-spacing:-0.5px;left:232.00px;width:80px;text-align:center;top:468.79px;height:14px;">2010-6-2</div>
<div style="font-family:'Liberation Sans', sans-serif;font-size:10.6px;line-height:14px;color:#000;white-space:pre;letter-spacing:-0.5px;left:296.20px;width:80px;text-align:center;top:468.79px;height:14px;">17:10:27</div>
<div style="font-family:'Liberation Sans', sans-serif;font-size:10.6px;line-height:14px;color:#000;white-space:pre;letter-spacing:-0.5px;left:362.50px;width:80px;text-align:center;top:468.79px;height:14px;">27.1</div>
<div style="font-family:'Liberation Sans', sans-serif;font-size:10.6px;line-height:14px;color:#000;white-space:pre;letter-spacing:-0.5px;left:411.70px;width:80px;text-align:center;top:468.79px;height:14px;">°C</div>
<div style="font-family:'Liberation Sans', sans-serif;font-size:10.6px;line-height:14px;color:#000;white-space:pre;letter-spacing:-0.5px;left:460.65px;width:80px;text-align:center;top:468.79px;height:14px;">-0.024</div>
<div style="font-family:'Liberation Sans', sans-serif;font-size:10.6px;line-height:14px;color:#000;white-space:pre;letter-spacing:-0.5px;left:509.35px;width:80px;text-align:center;top:468.79px;height:14px;">V</div>
<div style="font-family:'Liberation Sans', sans-serif;font-size:10.6px;line-height:14px;color:#000;white-space:pre;letter-spacing:-0.5px;left:558.40px;width:80px;text-align:center;top:468.79px;height:14px;">OFF</div>
<div class="hdr" style="left:195.80px;top:482.42px;width:42.70px;height:14.00px"></div>
<div style="left:666.60px;top:370.20px;width:15.40px;height:127.40px;background:#f6f5ee;"></div>
<div style="left:667.40px;top:372.40px;width:14.40px;height:13.00px;background:#ece9d8;border:1px solid;border-color:#fff #6e6c60 #6e6c60 #fff;box-shadow:inset -1px -1px 0 #aca899;"><svg style="left:0;top:0" width="12.40" height="11.00" viewBox="0 0 12.40 11.00"><path d="M6.2 3.4 L9.8 7.2 L2.6 7.2 Z" fill="#000"/></svg></div>
<div style="left:667.40px;top:484.80px;width:14.40px;height:12.80px;background:#ece9d8;border:1px solid;border-color:#fff #6e6c60 #6e6c60 #fff;box-shadow:inset -1px -1px 0 #aca899;"><svg style="left:0;top:0" width="12.40" height="10.80" viewBox="0 0 12.40 10.80"><path d="M6.2 7.4 L9.8 3.6 L2.6 3.6 Z" fill="#000"/></svg></div>
<div style="left:667.40px;top:471.20px;width:14.40px;height:12.00px;background:#ece9d8;border:1px solid;border-color:#fff #6e6c60 #6e6c60 #fff;box-shadow:inset -1px -1px 0 #aca899;"></div>
</body></html>
